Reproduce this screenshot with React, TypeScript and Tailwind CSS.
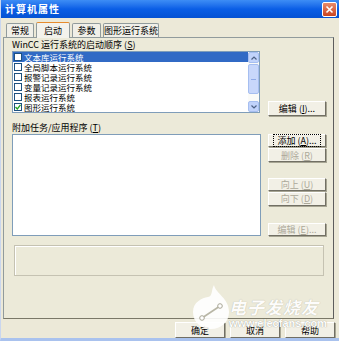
import React from 'react'

const font = { fontFamily: '"Noto Sans CJK SC", "Noto Sans", sans-serif' }

const startItems = [
	{ label: '文本库运行系统', checked: false, selected: true },
	{ label: '全局脚本运行系统', checked: false },
	{ label: '报警记录运行系统', checked: false },
	{ label: '变量记录运行系统', checked: false },
	{ label: '报表运行系统', checked: false },
	{ label: '图形运行系统', checked: true }
]

const Btn = ({
	children,
	disabled,
	focused,
	className = ''
}: {
	children: React.ReactNode
	disabled?: boolean
	focused?: boolean
	className?: string
}) => (
	<div
		className={`flex items-center justify-center h-[15px] border border-t-white border-l-white border-b-[#716f64] border-r-[#716f64] bg-[#f2f0e6] shadow-[1px_1px_0_#a7a593] text-[9px] leading-none ${
			disabled ? 'text-[#aca899]' : 'text-black'
		} ${className}`}
	>
		<span
			className={`px-[3px] py-[1px] ${focused ? 'outline outline-1 outline-dotted outline-black' : ''}`}
		>
			{children}
		</span>
	</div>
)

const Tab = ({ label, active, w }: { label: string; active?: boolean; w: string }) => (
	<div
		className={`${w} flex items-center justify-center border border-b-0 border-[#919b9c] rounded-t-[2px] text-[9px] leading-none ${
			active
				? 'h-[16px] bg-[#f3f2ec] border-t-[#e68b2c] -mb-px relative z-10'
				: 'h-[14px] bg-[#f0efe8]'
		}`}
	>
		{label}
	</div>
)

export default function App() {
	return (
		<div
			className="w-[339px] h-[341px] bg-[#ece9d8] flex flex-col relative overflow-hidden border-b-[3px] border-[#a9c2ee] border-l border-l-[#c9d6ef]"
			style={font}
		>
			{/* title bar */}
			<div className="h-[18px] shrink-0 flex items-center justify-between pl-[4px] pr-[2px] bg-gradient-to-b from-[#3d8df5] via-[#0a5ee6] to-[#0552d3]">
				<span className="text-white text-[10px] font-bold leading-none tracking-[1px]">计算机属性</span>
				<div className="w-[15px] h-[15px] rounded-[2px] border border-white bg-gradient-to-b from-[#e88a6b] to-[#c9431f] flex items-center justify-center">
					<svg width="9" height="9" viewBox="0 0 9 9">
						<path d="M1.5 1.5 L7.5 7.5 M7.5 1.5 L1.5 7.5" stroke="white" strokeWidth="1.6" />
					</svg>
				</div>
			</div>

			<div className="flex flex-col px-[2px] pt-[3px]">
				{/* tabs */}
				<div className="flex items-end h-[16px] pl-[3px] gap-[2px] shrink-0">
					<Tab label="常规" w="w-[28px]" />
					<Tab label="启动" w="w-[34px]" active />
					<Tab label="参数" w="w-[29px]" />
					<Tab label="图形运行系统" w="w-[56px]" />
				</div>

				{/* panel */}
				<div className="w-[331px] h-[282px] shrink-0 border border-[#919b9c] border-r-[#5d5d5d] border-b-[#7a7868] bg-[#ecead9] flex flex-col pl-[8px] pt-[2px]">
					<div className="h-[10px] text-[9px] leading-[10px] text-black whitespace-nowrap">
						WinCC 运行系统的启动顺序 (<u>S</u>)
					</div>

					<div className="flex items-end gap-[8px] mt-[1px] h-[62px]">
						<div className="w-[248px] h-[62px] bg-white border border-[#7f9db9] flex">
							<div className="flex-1 flex flex-col overflow-hidden">
								{startItems.map(it => (
									<div
										key={it.label}
										className={`h-[10px] shrink-0 flex items-center text-[8.5px] leading-[10px] overflow-hidden ${
											it.selected ? 'bg-[#316ac5] text-white' : 'text-black'
										}`}
									>
										<div className="w-[8px] h-[8px] shrink-0 border border-[#1c5180] bg-white mx-[1px] flex items-center justify-center">
											{it.checked && (
												<svg width="6" height="6" viewBox="0 0 6 6">
													<path d="M0.5 3 L2.3 5 L5.5 0.8" stroke="#21a121" strokeWidth="1.3" fill="none" />
												</svg>
											)}
										</div>
										<span className="ml-[1px]">{it.label}</span>
									</div>
								))}
							</div>
							{/* scrollbar */}
							<div className="w-[11px] flex flex-col bg-[#fbfbf8]">
								<div className="h-[11px] bg-[#c1d3fb] border border-[#a6bef0] rounded-[2px] flex items-center justify-center">
									<svg width="6" height="4" viewBox="0 0 6 4">
										<path d="M0.5 3.5 L3 1 L5.5 3.5" stroke="#4d6185" strokeWidth="1.2" fill="none" />
									</svg>
								</div>
								<div className="h-[30px] mt-[1px] bg-[#c8d7fb] border border-[#a6bef0] rounded-[2px] flex items-center justify-center">
									<div className="w-[5px] h-px bg-[#8faae8]" />
								</div>
								<div className="flex-1" />
								<div className="h-[11px] bg-[#c1d3fb] border border-[#a6bef0] rounded-[2px] flex items-center justify-center">
									<svg width="6" height="4" viewBox="0 0 6 4">
										<path d="M0.5 0.5 L3 3 L5.5 0.5" stroke="#4d6185" strokeWidth="1.2" fill="none" />
									</svg>
								</div>
							</div>
						</div>
						<Btn className="w-[58px] mb-[-3px]">编辑 (<u>I</u>)...</Btn>
					</div>

					<div className="h-[10px] text-[9px] leading-[10px] text-black mt-[10px] whitespace-nowrap">
						附加任务/应用程序 (<u>T</u>)
					</div>

					<div className="flex gap-[7px] mt-[1px] h-[102px]">
						<div className="w-[249px] h-[102px] bg-white border border-[#7f9db9]" />
						<div className="w-[58px] flex flex-col">
							<Btn focused>添加 (<u>A</u>)...</Btn>
							<Btn disabled className="mt-px">删除 (<u>R</u>)</Btn>
							<Btn disabled className="mt-[16px]">向上 (<u>U</u>)</Btn>
							<Btn disabled className="mt-px">向下 (<u>D</u>)</Btn>
							<Btn disabled className="mt-[17px]">编辑 (<u>E</u>)...</Btn>
						</div>
					</div>

					<div className="w-[310px] h-[31px] shrink-0 ml-[2px] mt-[9px] border border-[#c5c2b2] shadow-[inset_1px_1px_0_#fff]" />
				</div>

				{/* bottom buttons */}
				<div className="flex justify-end gap-[5px] mt-[3px] pr-[2px]">
					<Btn className="w-[50px] h-[16px]">确定</Btn>
					<Btn className="w-[50px] h-[16px]">取消</Btn>
					<Btn className="w-[50px] h-[16px]">帮助</Btn>
				</div>
			</div>

			{/* watermark */}
			<div className="absolute left-[190px] top-[284px] flex items-center pointer-events-none">
				<svg width="40" height="46" viewBox="0 0 40 46">
					<path
						d="M23 1 C25 10 38 14 38 28 C38 38 30 45 20 45 C10 45 2 38 2 28 C2 18 11 14 17 13 C22 12 20 6 23 1 Z"
						fill="white"
						opacity="0.9"
					/>
					<path d="M11 34 L29 22" stroke="#b8b6a6" strokeWidth="1.6" />
					<circle cx="11" cy="34" r="2.3" fill="white" stroke="#a8a696" strokeWidth="1" />
					<circle cx="29" cy="22" r="2.3" fill="white" stroke="#a8a696" strokeWidth="1" />
				</svg>
				<div className="flex flex-col mt-[12px] -ml-[2px]">
					<span className="text-white text-[17px] leading-[20px] italic font-bold tracking-[1px] opacity-90 [text-shadow:0_0_1px_#a8a696]">
						电子发烧友
					</span>
					<span
						className="text-white text-[11px] leading-[13px] font-bold opacity-90 [text-shadow:0_0_1px_#7a7868] whitespace-nowrap"
						style={{ fontFamily: '"Liberation Sans", sans-serif' }}
					>
						www.elecfans.com
					</span>
				</div>
			</div>
		</div>
	)
}
